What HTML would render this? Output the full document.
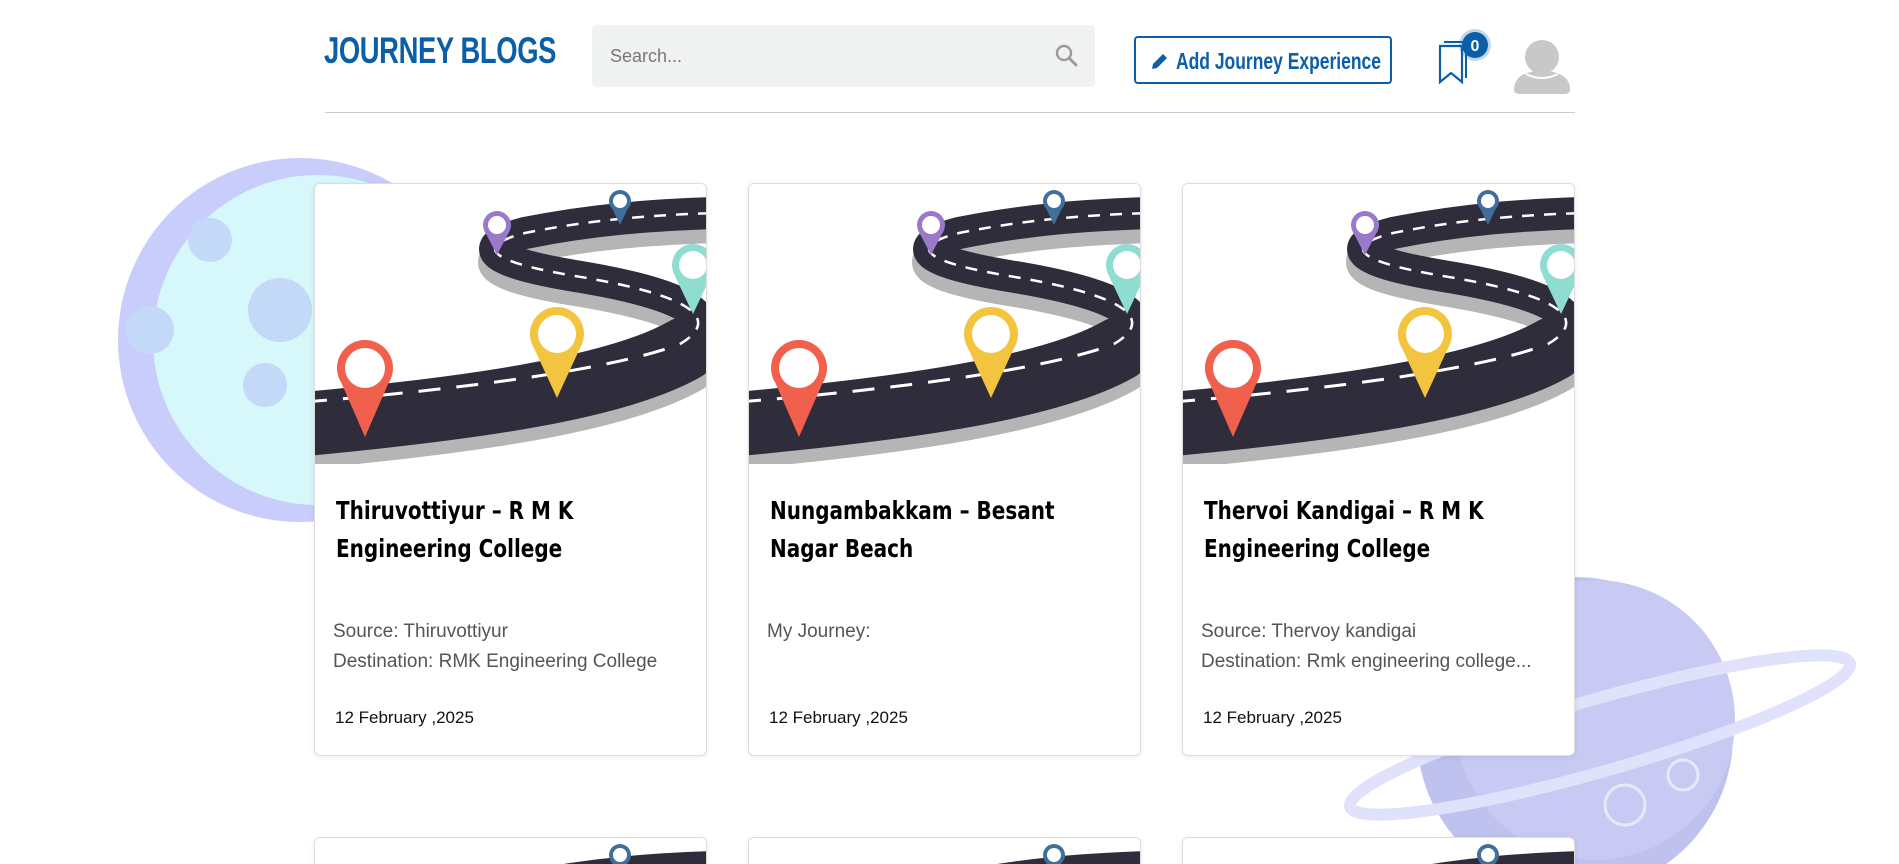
<!DOCTYPE html>
<html><head><meta charset="utf-8">
<style>
*{box-sizing:border-box;margin:0;padding:0}
html,body{width:1899px;height:864px;overflow:hidden;background:#fff;font-family:"Liberation Sans",sans-serif;position:relative}
.bg{position:absolute;left:0;top:0}
.logo{position:absolute;left:324px;top:30px;font-weight:bold;font-size:37px;color:#0b5ea8;letter-spacing:-0.5px;transform:scaleX(0.74);transform-origin:left;white-space:nowrap}
.search{position:absolute;left:592px;top:25px;width:503px;height:62px;background:#f0f1f1;border-radius:5px}
.search span{position:absolute;left:18px;top:21px;font-size:18px;color:#777}
.btn{position:absolute;left:1134px;top:36px;width:258px;height:48px;border:2px solid #0b5ea8;border-radius:4px}
.btn svg{position:absolute;left:14px;top:13px}
.btn span{position:absolute;left:40px;top:10px;color:#0b5ea8;font-weight:bold;font-size:23px;white-space:nowrap;transform:scaleX(0.76);transform-origin:left}
.line{position:absolute;left:325px;top:112px;width:1250px;height:1px;background:#ccc}
.card{position:absolute;width:393px;height:573px;background:#fff;border:1px solid #ddd;border-radius:6px;box-shadow:0 1px 6px rgba(0,0,0,.08);overflow:hidden}
.card svg{display:block}
.t{position:absolute;left:21px;top:308px;width:420px;font-family:"DejaVu Sans",sans-serif;font-weight:bold;font-size:25px;line-height:38px;color:#000;transform:scaleX(0.8);transform-origin:left}
.d{position:absolute;left:18px;top:433px;font-size:19px;line-height:30px;color:#555;white-space:nowrap}
.dt{position:absolute;left:20px;top:524px;font-size:17px;color:#111}
</style></head><body>
<svg class="bg" width="1899" height="864">
 <circle cx="300" cy="340" r="182" fill="#c9cdfb"/>
 <circle cx="318" cy="340" r="165" fill="#d6f8fb"/>
 <circle cx="280" cy="310" r="32" fill="#c4d8f8"/>
 <circle cx="335" cy="300" r="18" fill="#c4d8f8"/>
 <circle cx="265" cy="385" r="22" fill="#c4d8f8"/>
 <circle cx="210" cy="240" r="22" fill="#c4d8f8"/>
 <circle cx="150" cy="330" r="24" fill="#c4d8f8"/>
 <circle cx="1575" cy="735" r="158" fill="#bfc1ee"/>
 <circle cx="1595" cy="720" r="140" fill="#c8caf3"/>
 <ellipse cx="1600" cy="735" rx="260" ry="36" fill="none" stroke="#e0e2fb" stroke-width="12" transform="rotate(-16 1600 735)"/>
 <circle cx="1625" cy="805" r="20" fill="none" stroke="#e8e8fb" stroke-width="3"/>
 <circle cx="1683" cy="775" r="15" fill="none" stroke="#e8e8fb" stroke-width="3"/>
</svg>
<div class="logo">JOURNEY BLOGS</div>
<div class="search"><span>Search...</span>
 <svg style="position:absolute;left:462px;top:18px" width="26" height="26" viewBox="0 0 26 26"><circle cx="10" cy="10" r="7" fill="none" stroke="#999" stroke-width="2.4"/><line x1="15" y1="15" x2="22" y2="22" stroke="#999" stroke-width="2.8" stroke-linecap="round"/></svg></div>
<div class="btn"><svg width="20" height="20" viewBox="0 0 20 20"><path d="M2 18 L3 13 L13 3 L17 7 L7 17 Z" fill="#0b5ea8"/></svg><span>Add Journey Experience</span></div>
<svg style="position:absolute;left:1432px;top:26px" width="64" height="62" viewBox="0 0 64 62">
 <path d="M8 20 H30 V56 L19 47 L8 56 Z" fill="none" stroke="#0b5ea8" stroke-width="2.2"/>
 <path d="M12 16 H34 V52" fill="none" stroke="#0b5ea8" stroke-width="2"/>
 <circle cx="43" cy="19" r="16" fill="#0b5ea8" opacity=".25"/>
 <circle cx="43" cy="19" r="13" fill="#0b5ea8"/>
 <text x="43" y="25" text-anchor="middle" font-family="Liberation Sans" font-weight="bold" font-size="16" fill="#fff">0</text>
</svg>
<svg style="position:absolute;left:1512px;top:38px" width="60" height="56" viewBox="0 0 60 56">
 <circle cx="30" cy="19" r="17" fill="#c8c8c8"/>
 <path d="M2 52 C2 38 14 33 30 33 C46 33 58 38 58 52 C58 55 55 56 52 56 H8 C5 56 2 55 2 52Z" fill="#c8c8c8"/>
 <path d="M14 36 Q30 44 46 36" fill="none" stroke="#fff" stroke-width="2"/>
</svg>
<div class="line"></div>

<svg width="0" height="0" style="position:absolute">
 <defs>
  <g id="road">
   <rect width="393" height="280" fill="#fff"/>
   <g stroke-linecap="round" fill="none">
   <path d="M-10 250 C150 235 300 215 370 175" stroke="#b5b5b5" stroke-width="70"/>
   <path d="M370 175 C420 140 340 118 260 105 C170 90 160 75 210 62 C280 48 340 44 400 42" stroke="#b5b5b5" stroke-width="34"/>
   <path d="M370 162 C420 127 340 105 260 92 C170 77 160 62 210 49 C280 35 340 31 400 29" stroke="#2f2d3b" stroke-width="32"/>
   <path d="M-10 240 C150 225 300 205 370 165" stroke="#2f2d3b" stroke-width="64"/>
   <path d="M-10 218 C150 205 300 185 365 160" stroke="#fff" stroke-width="3" stroke-dasharray="22 16" stroke-linecap="butt"/>
   <path d="M365 160 C420 127 340 105 260 92 C170 77 160 62 210 49 C280 35 340 31 400 29" stroke="#fff" stroke-width="2.5" stroke-dasharray="12 10" stroke-linecap="butt"/>
   </g>
   <g>
    <circle cx="182" cy="41" r="14" fill="#9a79c9"/><polygon points="170,48 194,48 182,71" fill="#9a79c9"/><circle cx="182" cy="41" r="9" fill="#fff"/>
    <circle cx="305" cy="17" r="11" fill="#3f6f9a"/><polygon points="296,22 314,22 305,41" fill="#3f6f9a"/><circle cx="305" cy="17" r="7" fill="#fff"/>
    <circle cx="378" cy="81" r="21" fill="#8fdcd0"/><polygon points="360,92 396,92 378,130" fill="#8fdcd0"/><circle cx="378" cy="81" r="14" fill="#fff"/>
    <circle cx="242" cy="150" r="27" fill="#f2c440"/><polygon points="219,164 265,164 242,214" fill="#f2c440"/><circle cx="242" cy="150" r="19" fill="#fff"/>
    <circle cx="50" cy="184" r="28" fill="#f0604d"/><polygon points="26,198 74,198 50,253" fill="#f0604d"/><circle cx="50" cy="184" r="20" fill="#fff"/>
   </g>
  </g>
 </defs>
</svg>

<div class="card" style="left:314px;top:183px"><svg width="393" height="280"><use href="#road"/></svg>
 <div class="t">Thiruvottiyur – R M K<br>Engineering College</div>
 <div class="d">Source: Thiruvottiyur<br>Destination: RMK Engineering College</div>
 <div class="dt">12 February ,2025</div></div>
<div class="card" style="left:748px;top:183px"><svg width="393" height="280"><use href="#road"/></svg>
 <div class="t">Nungambakkam – Besant<br>Nagar Beach</div>
 <div class="d">My Journey:</div>
 <div class="dt">12 February ,2025</div></div>
<div class="card" style="left:1182px;top:183px"><svg width="393" height="280"><use href="#road"/></svg>
 <div class="t">Thervoi Kandigai – R M K<br>Engineering College</div>
 <div class="d">Source: Thervoy kandigai<br>Destination: Rmk engineering college...</div>
 <div class="dt">12 February ,2025</div></div>
<div class="card" style="left:314px;top:837px"><svg width="393" height="280"><use href="#road"/></svg></div>
<div class="card" style="left:748px;top:837px"><svg width="393" height="280"><use href="#road"/></svg></div>
<div class="card" style="left:1182px;top:837px"><svg width="393" height="280"><use href="#road"/></svg></div>
</body></html>
